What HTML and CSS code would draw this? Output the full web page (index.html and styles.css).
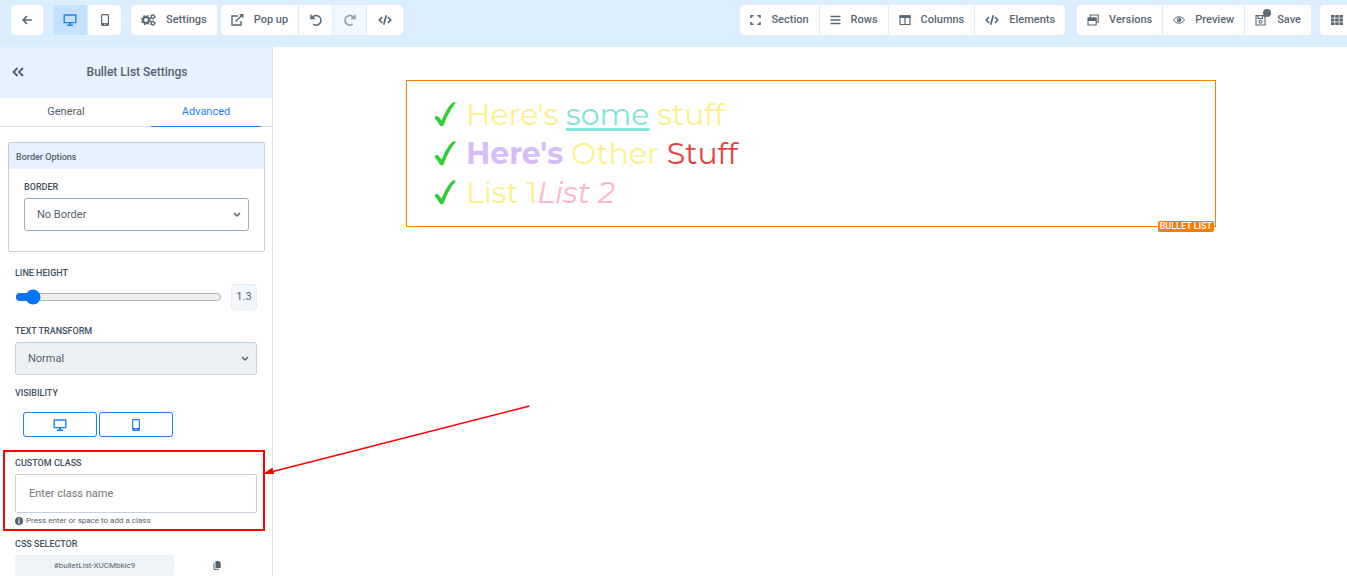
FILE: index.html
```html
<!DOCTYPE html>
<html lang="en">

<head>
    <meta charset="UTF-8">
    <meta name="viewport" content="width=device-width, initial-scale=1.0">
    <title>Bullet List Settings</title>
    <link rel="stylesheet" href="styles.css">
</head>

<body>
    <!-- Shared icons -->
    <svg class="sprite" aria-hidden="true">
        <symbol id="icon-desktop" viewBox="0 0 14 12">
            <path fill="none" stroke="currentColor" stroke-width="1.4" d="M1.2 1h11.6v7.6H1.2z" />
            <path fill="currentColor" d="M6 9h2v1.500h2V12H4v-1.500h2z" />
        </symbol>
        <symbol id="icon-mobile" viewBox="0 0 8 12">
            <rect x=".6" y=".6" width="6.8" height="10.8" rx="1" fill="none" stroke="currentColor" stroke-width="1.2" />
            <path fill="currentColor" d="M1 9h6v2.500H1z" />
            <circle cx="4" cy="10.3" r=".7" fill="#fff" />
        </symbol>
        <symbol id="icon-code" viewBox="0 0 14 12">
            <path fill="none" stroke="currentColor" stroke-width="1.7" d="M4.200 3L1.200 6l3 3M9.800 3l3 3-3 3M8.300 1.200L5.700 10.800" />
        </symbol>
        <symbol id="icon-check" viewBox="0 0 22 25">
            <path fill="currentColor" d="M.8 15.200c1-1.700 2.700-1.500 3.700-.5l3.200 3.700C10 12.500 13.500 5.500 17.800 1.200c1.200-1.200 3.700-1.300 3.900-.2C16.500 7.500 12.500 15 9.800 23c-.6 1.600-3.200 1.700-4.100.2-1.300-2.300-2.700-4.400-4.400-6.100-.6-.6-.8-1.200-.5-1.900z" />
        </symbol>
    </svg>

    <header class="toolbar">
        <div class="toolbar-side">
            <div class="group">
                <button class="tool back" aria-label="Back">
                    <svg width="10" height="10" viewBox="0 0 10 10"><path fill="none" stroke="currentColor" stroke-width="1.7" d="M9.800 5H1.500M5 1L1.200 5 5 9" /></svg>
                </button>
            </div>
            <div class="group">
                <button class="tool icon-only active" aria-label="Desktop view"><svg width="14" height="12"><use href="#icon-desktop" /></svg></button>
                <button class="tool icon-only" aria-label="Mobile view"><svg width="8" height="12"><use href="#icon-mobile" /></svg></button>
            </div>
            <div class="group gapped">
                <button class="tool">
                    <svg width="15" height="12" viewBox="0 0 15 12">
                        <circle cx="5" cy="6" r="2.9" fill="none" stroke="currentColor" stroke-width="2" />
                        <circle cx="5" cy="6" r="4.3" fill="none" stroke="currentColor" stroke-width="1.6" stroke-dasharray="1.7 1.677" />
                        <circle cx="11.8" cy="2.8" r="1.6" fill="none" stroke="currentColor" stroke-width="1.2" />
                        <circle cx="11.8" cy="2.8" r="2.4" fill="none" stroke="currentColor" stroke-dasharray="1.2 1.313" />
                        <circle cx="11.8" cy="9.2" r="1.6" fill="none" stroke="currentColor" stroke-width="1.2" />
                        <circle cx="11.8" cy="9.2" r="2.4" fill="none" stroke="currentColor" stroke-dasharray="1.2 1.313" />
                    </svg>
                    Settings
                </button>
                <div class="group">
                    <button class="tool">
                        <svg width="13" height="12" viewBox="0 0 13 12">
                            <path fill="none" stroke="currentColor" stroke-width="1.4" d="M7 2H1v9h9V7M4.500 7.500L10.500 1.800" />
                            <path fill="currentColor" d="M8 0h4.500v4.500z" />
                        </svg>
                        Pop up
                    </button>
                    <button class="tool icon-only" aria-label="Undo">
                        <svg width="12" height="12" viewBox="0 0 12 12"><path fill="none" stroke="currentColor" stroke-width="1.5" d="M1 .8v3.700h4M1.500 4.300C3 1.800 6 .8 8.500 2.200s3.300 4.800 1.500 7-4.600 2.300-6.700.9" /></svg>
                    </button>
                    <button class="tool icon-only" aria-label="Redo" disabled>
                        <svg width="12" height="12" viewBox="0 0 12 12"><path fill="none" stroke="currentColor" stroke-width="1.5" d="M11 .8v3.700H7M10.500 4.300C9 1.800 6 .8 3.500 2.200s-3.300 4.800-1.500 7 4.600 2.300 6.700.9" /></svg>
                    </button>
                    <button class="tool code" aria-label="Code"><svg width="14" height="12"><use href="#icon-code" /></svg></button>
                </div>
            </div>
        </div>

        <div class="toolbar-side right">
            <div class="group">
                <button class="tool">
                    <svg width="11" height="12" viewBox="0 0 11 12"><path fill="none" stroke="currentColor" stroke-width="1.6" d="M1 4V1.800h2.700M7.300 1.800H10V4M10 8v2.200H7.300M3.700 10.200H1V8" /></svg>
                    Section
                </button>
                <button class="tool">
                    <svg width="11" height="12" viewBox="0 0 11 12"><path stroke="currentColor" stroke-width="1.4" d="M.5 2.500h10M.5 6h10M.5 9.500h10" /></svg>
                    Rows
                </button>
                <button class="tool">
                    <svg width="12" height="12" viewBox="0 0 12 12">
                        <path fill="none" stroke="currentColor" stroke-width="1.2" d="M1 1.800h10v8.700H1zM6 3v7" />
                        <path fill="currentColor" d="M.5 1.200h11v2.800H.5z" />
                    </svg>
                    Columns
                </button>
                <button class="tool">
                    <svg width="14" height="12"><use href="#icon-code" /></svg>
                    Elements
                </button>
            </div>
            <div class="group">
                <button class="tool">
                    <svg width="12" height="12" viewBox="0 0 12 12">
                        <path fill="none" stroke="currentColor" stroke-width="1.1" d="M3.200 3V1h8v7.300H9.400M1 4h8.200v7H1z" />
                        <path fill="currentColor" d="M1 3.500h8.200v3.500H1z" />
                    </svg>
                    Versions
                </button>
                <button class="tool">
                    <svg width="12" height="12" viewBox="0 0 12 12">
                        <path fill="none" stroke="currentColor" d="M.6 6C3 1.700 9 1.700 11.400 6 9 10.300 3 10.300.6 6z" />
                        <circle cx="6" cy="5.8" r="2.3" fill="currentColor" />
                        <circle cx="5.4" cy="5" r=".7" fill="#fff" />
                    </svg>
                    Preview
                </button>
                <button class="tool save">
                    <svg width="12" height="12" viewBox="0 0 12 12">
                        <path fill="none" stroke="currentColor" stroke-width="1.1" d="M1 1.600h7.500L10 3v8H1zM3 2v2.500h4.500V2" />
                        <circle cx="5.5" cy="7.8" r="1.5" fill="none" stroke="currentColor" stroke-width="1.1" />
                    </svg>
                    <span class="unsaved-dot"></span>
                    Save
                </button>
            </div>
            <div class="group edge">
                <button class="tool apps" aria-label="Apps">
                    <svg width="12" height="10" viewBox="0 0 12 10"><path fill="currentColor" d="M0 0h3.500v2.800H0zM4.200 0h3.500v2.800H4.200zM8.400 0h3.500v2.800H8.400zM0 3.600h3.500v2.800H0zM4.200 3.600h3.500v2.800H4.200zM8.400 3.600h3.500v2.800H8.400zM0 7.200h3.500V10H0zM4.200 7.200h3.500V10H4.200zM8.400 7.200h3.500V10H8.400z" /></svg>
                </button>
            </div>
        </div>
    </header>

    <div class="workspace">
        <aside class="sidebar">
            <div class="sidebar-header">
                <button class="collapse" aria-label="Collapse">
                    <svg width="12" height="10" viewBox="0 0 12 10"><path fill="none" stroke="currentColor" stroke-width="1.9" d="M5.500 1l-4 4 4 4M11 1L7 5l4 4" /></svg>
                </button>
                <h1>Bullet List Settings</h1>
            </div>

            <nav class="tabs">
                <a href="#" class="tab">General</a>
                <a href="#" class="tab selected">Advanced</a>
            </nav>

            <section class="panel">
                <h2>Border Options</h2>
                <div class="panel-body">
                    <label for="border">Border</label>
                    <div class="select">
                        <select id="border">
                            <option>No Border</option>
                        </select>
                        <svg width="8" height="6" viewBox="0 0 8 6"><path fill="none" stroke="currentColor" stroke-width="1.5" d="M1 1l3 3 3-3" /></svg>
                    </div>
                </div>
            </section>

            <div class="field">
                <label for="line-height">Line Height</label>
                <div class="slider">
                    <input type="range" id="line-height" min="1" max="7" step="0.1" value="1.3">
                    <output for="line-height">1.3</output>
                </div>
            </div>

            <div class="field">
                <label for="transform">Text Transform</label>
                <div class="select muted">
                    <select id="transform">
                        <option>Normal</option>
                    </select>
                    <svg width="8" height="6" viewBox="0 0 8 6"><path fill="none" stroke="currentColor" stroke-width="1.5" d="M1 1l3 3 3-3" /></svg>
                </div>
            </div>

            <div class="field visibility">
                <span class="label">Visibility</span>
                <div class="devices">
                    <button aria-label="Show on desktop"><svg width="14" height="12"><use href="#icon-desktop" /></svg></button>
                    <button aria-label="Show on mobile"><svg width="8" height="12"><use href="#icon-mobile" /></svg></button>
                </div>
            </div>

            <div class="field custom-class">
                <label for="custom-class">Custom Class</label>
                <input type="text" id="custom-class" placeholder="Enter class name">
                <p class="hint">
                    <svg width="8" height="8" viewBox="0 0 8 8"><circle cx="4" cy="4" r="4" fill="currentColor" /><path stroke="#fff" stroke-width="1.2" d="M4 1.200v1.300M4 3.300v3.200" /></svg>
                    Press enter or space to add a class
                </p>
                <!-- Callout frame and its arrow -->
                <div class="callout">
                    <svg class="callout-arrow" width="268" height="72" viewBox="0 0 268 72">
                        <path fill="none" stroke="#f00" stroke-width="1.5" d="M266.500 2L8 68" />
                        <path fill="#f00" d="M0 70l9.500-6.500 1.600 6.500z" />
                    </svg>
                </div>
            </div>

            <div class="field selector">
                <span class="label">CSS Selector</span>
                <div class="selector-row">
                    <code>#bulletList-XUCMbkic9</code>
                    <button aria-label="Copy selector">
                        <svg width="8" height="9" viewBox="0 0 8 9"><path fill="currentColor" d="M2.500 0H6l1.700 1.700V7H2.500z" /><path fill="none" stroke="currentColor" d="M1 1.800v6.500h5" /></svg>
                    </button>
                </div>
            </div>
        </aside>

        <main class="canvas">
            <div class="block">
                <ul>
                    <li><svg class="check"><use href="#icon-check" /></svg><span>Here's <u>some</u> stuff</span></li>
                    <li><svg class="check"><use href="#icon-check" /></svg><span><b>Here's</b> Other <span class="red">Stuff</span></span></li>
                    <li><svg class="check"><use href="#icon-check" /></svg><span>List 1<i>List 2</i></span></li>
                </ul>
                <span class="block-tag">Bullet List</span>
            </div>
        </main>
    </div>
</body>

</html>
```

FILE: styles.css
```css
* {
    box-sizing: border-box;
}

body {
    margin: 0;
    height: 100vh;
    display: flex;
    flex-direction: column;
    overflow: hidden;
    background: #fff;
    color: #52616e;
    font-family: Roboto, "Liberation Sans", sans-serif;
    font-size: 11px;
    line-height: 16px;
}

button,
input,
select {
    font: inherit;
    color: inherit;
}

button {
    display: flex;
    align-items: center;
    justify-content: center;
    padding: 0;
    border: 0;
    background: none;
    cursor: pointer;
}

.sprite {
    position: absolute;
    width: 0;
    height: 0;
}

/* Toolbar */
.toolbar {
    display: flex;
    justify-content: space-between;
    flex: none;
    height: 47px;
    padding: 5px 0 0 11px;
    background: #dbedff;
}

.toolbar-side {
    display: flex;
    gap: 10px;
}

.toolbar-side.right {
    gap: 12px;
}

.group {
    display: flex;
    gap: 1px;
    height: 30px;
    border-radius: 4px;
    overflow: hidden;
}

.group.gapped {
    gap: 4px;
}

.tool {
    gap: 10px;
    padding: 0 10px;
    background: #fff;
    color: #586874;
    font-weight: 500;
    white-space: nowrap;
}

.tool.back {
    width: 32px;
}

.tool.icon-only {
    width: 33px;
}

.tool.code {
    width: 36px;
}

.tool.active {
    width: 34px;
    background: #c5e1ff;
    color: #1a84f5;
}

.tool:disabled {
    background: #f2f8ff;
    color: #8c9ba8;
}

.tool.save {
    position: relative;
}

.unsaved-dot {
    position: absolute;
    left: 18px;
    top: 4px;
    width: 8px;
    height: 8px;
    border-radius: 50%;
    background: #5c6c79;
}

.group.edge {
    margin-left: -3px;
    border-radius: 4px 0 0 4px;
}

.tool.apps {
    width: 27px;
    padding: 0 0 0 6px;
}

/* Sidebar */
.workspace {
    display: flex;
    flex: 1;
    min-height: 0;
}

.sidebar {
    position: relative;
    z-index: 1;
    flex: none;
    width: 273px;
    border-right: 1px solid #dde1e5;
}

.sidebar-header {
    display: flex;
    align-items: center;
    height: 51px;
    padding: 0 12px 2px;
    background: #e6f2ff;
}

.collapse {
    width: 12px;
    height: 20px;
}

.sidebar-header h1 {
    flex: 1;
    margin: 0;
    padding-right: 10px;
    font-size: 12px;
    font-weight: 500;
    text-align: center;
}

.tabs {
    display: flex;
    gap: 19px;
    height: 29px;
    padding-right: 11px;
    border-bottom: 1px solid #d3dadd;
}

.tab {
    flex: 0 0 132px;
    height: 29px;
    padding-top: 6px;
    color: inherit;
    text-align: center;
    text-decoration: none;
}

.tab.selected {
    flex: 1;
    color: #1a84f5;
    border-bottom: 1px solid #1a84f5;
}

.panel {
    margin: 15px 7px 0 8px;
    border: 1px solid #c4cfdc;
    border-radius: 2px;
}

.panel h2 {
    margin: 0;
    padding: 6px 7px 4px;
    background: #e6f2ff;
    font-size: 9px;
    font-weight: 500;
}

.panel-body {
    padding: 10px 15px 20px;
}

label,
.label {
    display: block;
    color: #414f5c;
    font-size: 9px;
    font-weight: 500;
    text-transform: uppercase;
}

.field {
    position: relative;
    margin: 13px 15px 0;
}

.select {
    position: relative;
    margin-top: 3px;
}

.select select {
    display: block;
    width: 100%;
    height: 33px;
    padding: 0 12px;
    border: 1px solid #9babbe;
    border-radius: 3px;
    background: #fff;
    appearance: none;
}

.select.muted select {
    border-color: #c4cfdc;
    background: #ecf1f6;
}

.select svg {
    position: absolute;
    right: 8px;
    top: 14px;
}

.slider {
    display: flex;
    align-items: center;
    gap: 9px;
    margin-top: 3px;
}

.slider input {
    flex: 1;
    min-width: 0;
    margin: 0;
}

.slider output {
    width: 26px;
    height: 26px;
    border: 1px solid #e8edf1;
    border-radius: 4px;
    background: #f3f8fc;
    line-height: 24px;
    text-align: center;
}

.visibility {
    margin-top: 10px;
}

.devices {
    display: flex;
    gap: 2px;
    margin-top: 11px;
    padding-left: 8px;
}

.devices button {
    width: 74px;
    height: 25px;
    border: 1px solid #1a84f5;
    border-radius: 3px;
    color: #1a84f5;
}

.custom-class {
    margin-top: 18px;
}

.custom-class input {
    display: block;
    width: 100%;
    height: 39px;
    margin-top: 3px;
    padding: 0 13px;
    border: 1px solid #c4cfdc;
    border-radius: 2px;
}

.custom-class input::placeholder {
    color: #757575;
}

.hint {
    display: flex;
    align-items: center;
    gap: 3px;
    margin: 0;
    font-size: 8px;
}

/* Drawn over the field it points out */
.callout {
    position: absolute;
    inset: -5px -8px -2px -12px;
    border: 2px solid #f00;
    pointer-events: none;
}

.callout-arrow {
    position: absolute;
    left: 100%;
    top: -48px;
}

.selector {
    margin-top: 7px;
}

.selector-row {
    display: flex;
    align-items: center;
    margin-top: 3px;
}

.selector-row code {
    width: 159px;
    border-radius: 3px;
    background: #eff4f8;
    font-family: inherit;
    font-size: 8px;
    line-height: 21px;
    text-align: center;
}

.selector-row button {
    margin-left: 39px;
}

/* Canvas */
.canvas {
    flex: 1;
    padding: 33px 131px 0 133px;
}

.block {
    position: relative;
    padding: 14px 27px;
    border: 1px solid #ff7a00;
}

.block ul {
    margin: 0;
    padding: 0;
    list-style: none;
    color: #fbf08a;
    font-family: Montserrat, Inter, sans-serif;
    font-size: 30px;
    line-height: 39px;
}

.block li {
    display: flex;
    align-items: center;
    gap: 10px;
}

.block u {
    color: #81e6d9;
    text-decoration-thickness: 3px;
    text-underline-offset: 3px;
}

.block b {
    color: #d6bcfa;
}

.block i {
    color: #fbb6ce;
}

.block .red {
    color: #e53e3e;
}

.check {
    width: 22px;
    height: 25px;
    color: #32cd32;
}

.block-tag {
    position: absolute;
    right: 1px;
    bottom: -6px;
    padding: 0 2px;
    border-radius: 2px;
    background: #ff7a00;
    color: #fff;
    font-size: 9px;
    font-weight: 500;
    line-height: 11px;
    text-transform: uppercase;
}
```
